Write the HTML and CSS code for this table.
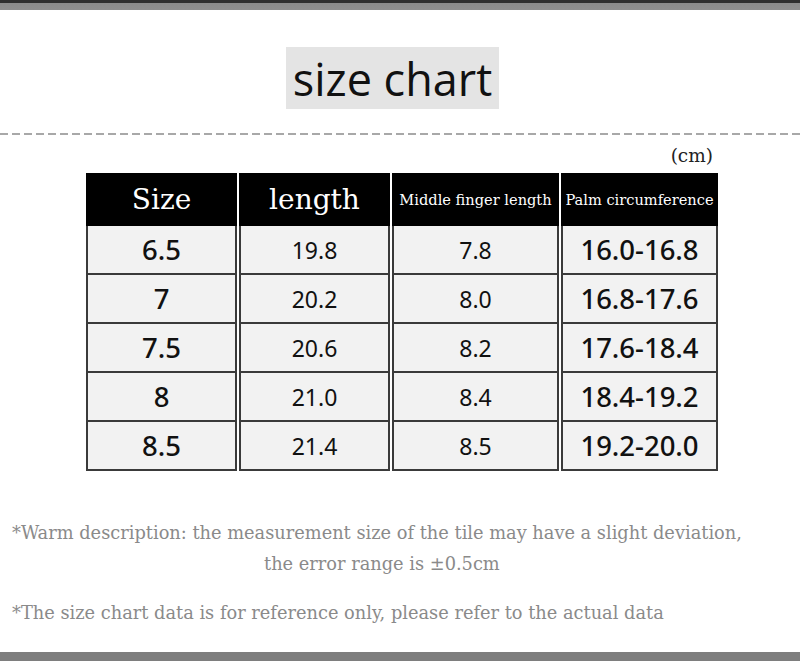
FILE: index.html
```html
<!DOCTYPE html>
<html>
<head>
<meta charset="utf-8">
<link rel="stylesheet" href="styles.css">
</head>
<body>
<div class="page">
  <div class="bar-top"></div>
  <div class="title-wrap"><h1 class="title">size chart</h1></div>
  <div class="dash"></div>
  <div class="unit">(cm)</div>
  <div class="chart">
    <div class="cell head big">Size</div>
    <div class="cell head big">length</div>
    <div class="cell head small">Middle finger length</div>
    <div class="cell head small">Palm circumference</div>

    <div class="cell strong">6.5</div>
    <div class="cell">19.8</div>
    <div class="cell">7.8</div>
    <div class="cell strong">16.0-16.8</div>

    <div class="cell strong">7</div>
    <div class="cell">20.2</div>
    <div class="cell">8.0</div>
    <div class="cell strong">16.8-17.6</div>

    <div class="cell strong">7.5</div>
    <div class="cell">20.6</div>
    <div class="cell">8.2</div>
    <div class="cell strong">17.6-18.4</div>

    <div class="cell strong">8</div>
    <div class="cell">21.0</div>
    <div class="cell">8.4</div>
    <div class="cell strong">18.4-19.2</div>

    <div class="cell strong">8.5</div>
    <div class="cell">21.4</div>
    <div class="cell">8.5</div>
    <div class="cell strong">19.2-20.0</div>
  </div>
  <div class="notes">
    <p class="note">*Warm description: the measurement size of the tile may have a slight deviation,</p>
    <p class="note center">the error range is ±0.5cm</p>
    <p class="note gap">*The size chart data is for reference only, please refer to the actual data</p>
  </div>
  <div class="bar-bottom"></div>
</div>
</body>
</html>
```
FILE: styles.css
```css
html, body {
  margin: 0;
  padding: 0;
  background: #fff;
}
.page {
  width: 800px;
  height: 661px;
  display: flex;
  flex-direction: column;
  overflow: hidden;
}
.bar-top {
  height: 10px;
  background: linear-gradient(#2e2e2e 0, #2e2e2e 3px, #8a8a8a 3px, #8e8e8e 100%);
  flex: none;
}
.title-wrap {
  display: flex;
  justify-content: center;
  padding-top: 37px;
  padding-right: 15px;
}
.title {
  margin: 0;
  background: #e4e4e4;
  width: 213px;
  height: 62px;
  display: flex;
  align-items: center;
  justify-content: center;
  font-family: "Open Sans", sans-serif;
  font-weight: 400;
  font-size: 45px;
  color: #111;
}
.dash {
  margin-top: 24px;
  height: 2px;
  background: repeating-linear-gradient(90deg, #a8a8a8 0, #a8a8a8 8px, transparent 8px, transparent 12px);
}
.unit {
  align-self: flex-end;
  margin-right: 87px;
  margin-top: 10px;
  font-family: "DejaVu Serif", serif;
  font-size: 18.5px;
  color: #222;
  line-height: 22px;
}
.chart {
  margin-left: 86px;
  margin-top: 6px;
  display: grid;
  grid-template-columns: 151px 151px 167px 157px;
  grid-template-rows: 53px repeat(5, 49px);
  column-gap: 2px;
  width: 631px;
}
.cell {
  box-sizing: border-box;
  background: #f2f2f2;
  border: 2px solid #3a3a3a;
  border-top: none;
  display: flex;
  align-items: center;
  justify-content: center;
  font-family: "Noto Sans", sans-serif;
  font-size: 23px;
  color: #111;
}
.cell.strong {
  font-size: 27.5px;
  font-weight: 500;
}
.cell.head {
  background: #000;
  color: #fff;
  border: none;
  font-family: "DejaVu Serif", serif;
}
.cell.head.big {
  font-size: 28px;
}
.cell.head.small {
  font-size: 14.6px;
}
.notes {
  margin-top: 46px;
  font-family: "DejaVu Serif", serif;
  color: #8a8a8a;
  font-size: 17.8px;
}
.note {
  margin: 0 0 0 12px;
  line-height: 31px;
  white-space: nowrap;
}
.note.center {
  margin-left: 264px;
}
.note.gap {
  margin-top: 18px;
}
.bar-bottom {
  margin-top: auto;
  height: 9px;
  background: #7e7e7e;
  flex: none;
}
```
